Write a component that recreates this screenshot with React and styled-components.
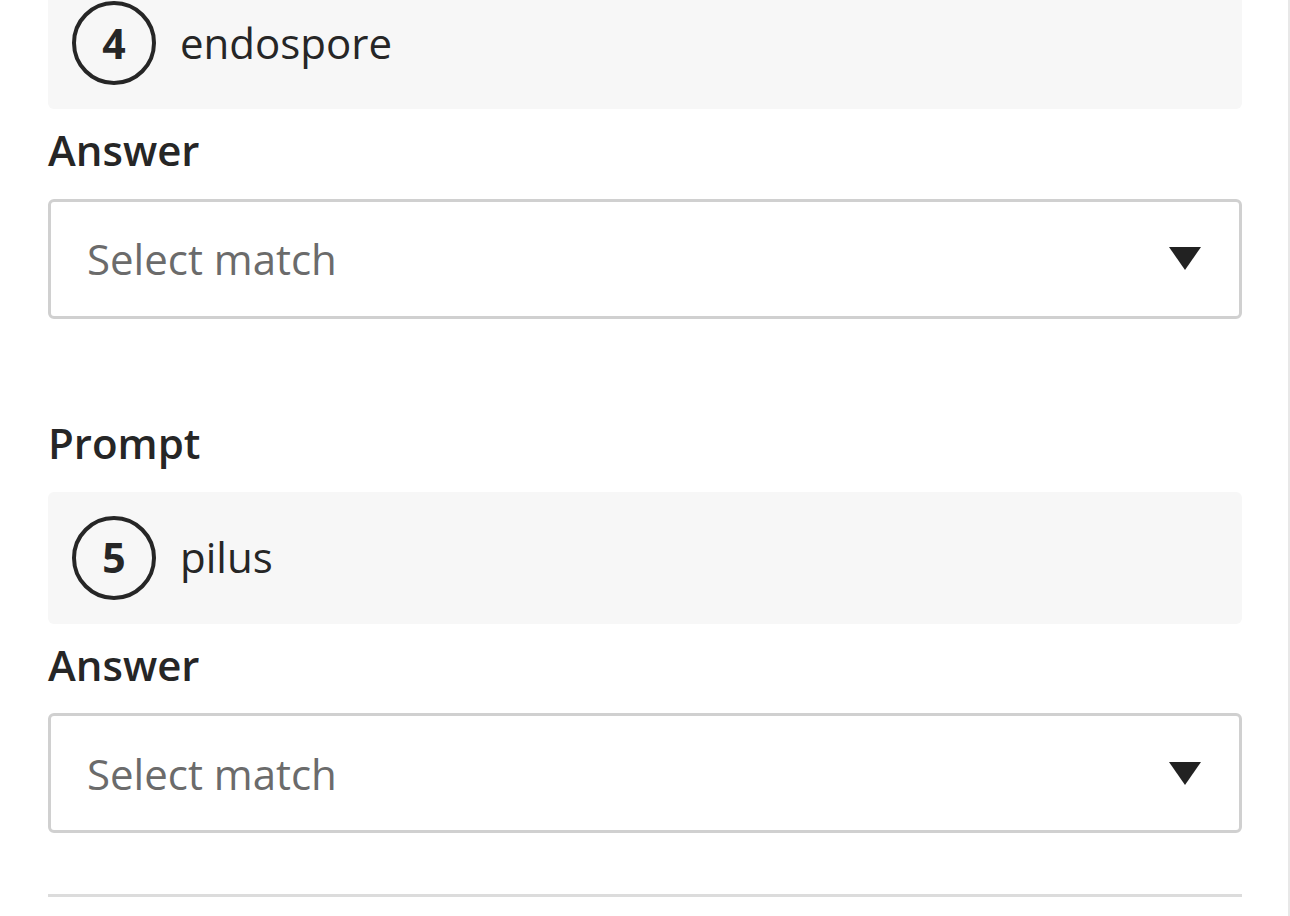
import React from 'react';
import styled, { createGlobalStyle } from 'styled-components';

const GlobalStyle = createGlobalStyle`
  html, body {
    margin: 0;
    padding: 0;
    background: #ffffff;
    overflow: hidden;
  }
  body {
    font-family: 'Open Sans', 'Noto Sans', 'Liberation Sans', sans-serif;
    color: #262626;
  }
`;

const Page = styled.div`
  width: 1290px;
  height: 916px;
  box-sizing: border-box;
  padding: 0 46px 0 48px;
  border-right: 2px solid #e8e8e8;
  overflow: hidden;
`;

// the page is scrolled: only the lower part of item 4's prompt shows
const List = styled.div`
  display: flex;
  flex-direction: column;
  gap: 95px;
  margin-top: -23px;
`;

const Item = styled.div`
  display: flex;
  flex-direction: column;
`;

const Label = styled.div`
  font-size: 42px;
  font-weight: 600;
  line-height: 1.4;
  color: #262626;
  margin-top: ${p => (p.$after ? '12px' : '0')};
  margin-bottom: 19px;
`;

const PromptBox = styled.div`
  display: flex;
  align-items: center;
  gap: 24px;
  padding: 24px;
  background: #f7f7f7;
  border-radius: 6px;
`;

const Badge = styled.div`
  width: 84px;
  height: 84px;
  box-sizing: border-box;
  border: 4px solid #262626;
  border-radius: 50%;
  display: flex;
  align-items: center;
  justify-content: center;
  font-size: 41px;
  font-weight: 700;
  line-height: 1;
  flex-shrink: 0;
`;

const PromptText = styled.span`
  font-size: 42px;
  line-height: 1.2;
  color: #262626;
`;

const Select = styled.div`
  height: 120px;
  box-sizing: border-box;
  border: 3px solid #d0d0d0;
  border-radius: 6px;
  display: flex;
  align-items: center;
  justify-content: space-between;
  padding: 0 38px 0 36px;
  background: #fff;
`;

const Placeholder = styled.span`
  font-size: 42px;
  color: #6b6b6b;
`;

const Divider = styled.hr`
  margin: 61px 0 0;
  border: none;
  height: 3px;
  background: #dcdcdc;
`;

const Caret = () => (
  <svg width="32" height="23" viewBox="0 0 32 23">
    <path d="M0 0 H32 L16 23 Z" fill="#222" />
  </svg>
);

const items = [
  { n: 4, text: 'endospore', hideLabel: true },
  { n: 5, text: 'pilus' },
];

export default function App() {
  return (
    <>
      <GlobalStyle />
      <Page>
        <List>
          {items.map(item => (
            <Item key={item.n}>
              {!item.hideLabel && <Label>Prompt</Label>}
              <PromptBox>
                <Badge>{item.n}</Badge>
                <PromptText>{item.text}</PromptText>
              </PromptBox>
              <Label $after>Answer</Label>
              <Select>
                <Placeholder>Select match</Placeholder>
                <Caret />
              </Select>
            </Item>
          ))}
        </List>
        <Divider />
      </Page>
    </>
  );
}
